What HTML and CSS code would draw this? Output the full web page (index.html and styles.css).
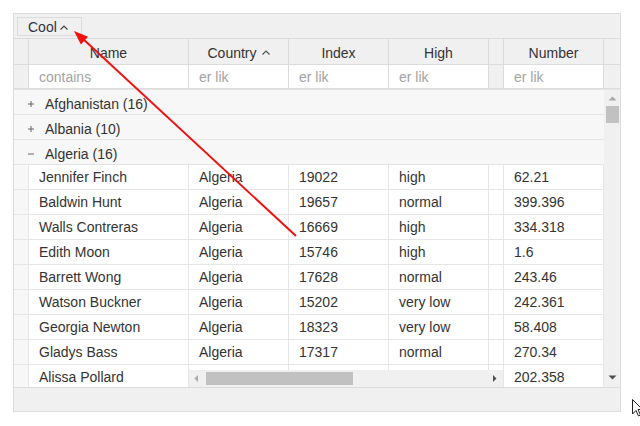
FILE: index.html
```html
<!DOCTYPE html>
<html>
<head>
<meta charset="utf-8">
<link rel="stylesheet" href="styles.css">
</head>
<body>
<div class="grid">
  <div class="group-panel">
    <span class="chip">Cool<svg class="chev" width="8" height="5" viewBox="0 0 8 5"><polyline points="0.5,4.5 4,1 7.5,4.5" fill="none" stroke="#444" stroke-width="1.2"/></svg></span>
  </div>
  <div class="head-row">
    <div class="hc indent"></div>
    <div class="hc name">Name</div>
    <div class="hc w100">Country<svg class="chev" width="8" height="5" viewBox="0 0 8 5"><polyline points="0.5,4.5 4,1 7.5,4.5" fill="none" stroke="#555" stroke-width="1.2"/></svg></div>
    <div class="hc w100">Index</div>
    <div class="hc w100">High</div>
    <div class="hc gap"></div>
    <div class="hc w100">Number</div>
    <div class="hc vs"></div>
  </div>
  <div class="filter-row">
    <div class="fc indent"></div>
    <div class="fc name input">contains</div>
    <div class="fc w100 input">er lik</div>
    <div class="fc w100 input">er lik</div>
    <div class="fc w100 input">er lik</div>
    <div class="fc gap"></div>
    <div class="fc w100 input">er lik</div>
    <div class="fc vs"></div>
  </div>
  <div class="body">
    <div class="rows">
      <div class="grow"><svg class="tog" width="14" height="8" viewBox="0 0 14 8"><path d="M4 4h6M7 1v6" stroke="#666" stroke-width="1"/></svg>Afghanistan (16)</div>
      <div class="grow"><svg class="tog" width="14" height="8" viewBox="0 0 14 8"><path d="M4 4h6M7 1v6" stroke="#666" stroke-width="1"/></svg>Albania (10)</div>
      <div class="grow"><svg class="tog" width="14" height="8" viewBox="0 0 14 8"><path d="M4 4h6" stroke="#666" stroke-width="1"/></svg>Algeria (16)</div>
      <div class="row"><div class="dc indent"></div><div class="dc name">Jennifer Finch</div><div class="dc w100">Algeria</div><div class="dc w100">19022</div><div class="dc w100">high</div><div class="dc gap"></div><div class="dc w100">62.21</div></div>
      <div class="row"><div class="dc indent"></div><div class="dc name">Baldwin Hunt</div><div class="dc w100">Algeria</div><div class="dc w100">19657</div><div class="dc w100">normal</div><div class="dc gap"></div><div class="dc w100">399.396</div></div>
      <div class="row"><div class="dc indent"></div><div class="dc name">Walls Contreras</div><div class="dc w100">Algeria</div><div class="dc w100">16669</div><div class="dc w100">high</div><div class="dc gap"></div><div class="dc w100">334.318</div></div>
      <div class="row"><div class="dc indent"></div><div class="dc name">Edith Moon</div><div class="dc w100">Algeria</div><div class="dc w100">15746</div><div class="dc w100">high</div><div class="dc gap"></div><div class="dc w100">1.6</div></div>
      <div class="row"><div class="dc indent"></div><div class="dc name">Barrett Wong</div><div class="dc w100">Algeria</div><div class="dc w100">17628</div><div class="dc w100">normal</div><div class="dc gap"></div><div class="dc w100">243.46</div></div>
      <div class="row"><div class="dc indent"></div><div class="dc name">Watson Buckner</div><div class="dc w100">Algeria</div><div class="dc w100">15202</div><div class="dc w100">very low</div><div class="dc gap"></div><div class="dc w100">242.361</div></div>
      <div class="row"><div class="dc indent"></div><div class="dc name">Georgia Newton</div><div class="dc w100">Algeria</div><div class="dc w100">18323</div><div class="dc w100">very low</div><div class="dc gap"></div><div class="dc w100">58.408</div></div>
      <div class="row"><div class="dc indent"></div><div class="dc name">Gladys Bass</div><div class="dc w100">Algeria</div><div class="dc w100">17317</div><div class="dc w100">normal</div><div class="dc gap"></div><div class="dc w100">270.34</div></div>
      <div class="row"><div class="dc indent"></div><div class="dc name">Alissa Pollard</div><div class="dc w100">Algeria</div><div class="dc w100">16340</div><div class="dc w100">high</div><div class="dc gap"></div><div class="dc w100">202.358</div></div>
      <div class="hscroll">
        <svg class="harrow" width="5" height="7" viewBox="0 0 5 7"><polygon points="4,0 4,7 0.5,3.5" fill="#a8a8a8"/></svg>
        <div class="hthumb"></div>
        <svg class="harrow right" width="5" height="7" viewBox="0 0 5 7"><polygon points="1,0 1,7 4.5,3.5" fill="#505050"/></svg>
      </div>
    </div>
    <div class="vscroll">
      <svg class="varrow" width="9" height="5" viewBox="0 0 9 5"><polygon points="0.5,4.5 8.5,4.5 4.5,0.5" fill="#a8a8a8"/></svg>
      <div class="vthumb"></div>
      <div class="vspace"></div>
      <svg class="varrow" width="9" height="5" viewBox="0 0 9 5"><polygon points="0.5,0.5 8.5,0.5 4.5,4.5" fill="#505050"/></svg>
    </div>
  </div>
  <div class="footer"></div>
</div>
<svg class="overlay" width="640" height="426" viewBox="0 0 640 426">
  <line x1="296" y1="236" x2="82" y2="38" stroke="#f01010" stroke-width="2"/>
  <polygon points="74,31 80.9,44.5 88,36.8" fill="#f01010"/>
  <polygon points="632.5,399.5 632.5,414 636,410.5 638.5,416 640.5,415 638,409.5 642.5,409.5" fill="#fff" stroke="#222" stroke-width="1"/>
</svg>
</body>
</html>
```

FILE: styles.css
```css
* { box-sizing: border-box; }
body {
  margin: 0;
  padding: 13px;
  font-family: "Liberation Sans", Arial, sans-serif;
  font-size: 14px;
  color: #333;
  background: #fff;
}
.grid {
  width: 608px;
  border: 1px solid #dcdcdc;
  background: #f0f0f0;
}
.group-panel {
  height: 24px;
  padding: 3px 0 0 3px;
}
.chip {
  display: inline-flex;
  align-items: flex-start;
  height: 19px;
  border: 1px solid #dcdcdc;
  padding: 1px 13px 0 10px;
  color: #2f3440;
  line-height: 17px;
}
.chip .chev { margin-left: 3px; margin-top: 6px; }
.head-row, .filter-row {
  display: flex;
}
.head-row {
  border-top: 1px solid #dcdcdc;
  border-bottom: 1px solid #dcdcdc;
}
.hc {
  height: 25px;
  padding-top: 5px;
  line-height: 19px;
  text-align: center;
  border-right: 1px solid #dcdcdc;
  display: flex;
  justify-content: center;
  align-items: flex-start;
}
.hc .chev { margin-left: 5px; margin-top: 6px; }
.indent { width: 15px; }
.name { width: 160px; }
.w100 { width: 100px; }
.gap { width: 15px; }
.hc.vs, .fc.vs { width: 16px; border-right: none; }
.filter-row { border-bottom: 1px solid #dcdcdc; }
.fc {
  height: 23px;
  padding-top: 1px;
  line-height: 22px;
  border-right: 1px solid #dcdcdc;
}
.fc.input {
  background: #fff;
  color: #a3a3a3;
  padding-left: 10px;
}
.body {
  display: flex;
  border-top: 1px solid #e4e4e4;
  height: 298px;
}
.rows {
  position: relative;
  width: 590px;
  height: 297px;
  overflow: hidden;
  background: #fff;
}
.grow {
  height: 25px;
  border-bottom: 1px solid #e4e4e4;
  background: #f7f7f7;
  padding: 4px 0 0 10px;
  line-height: 20px;
  display: flex;
  align-items: flex-start;
}
.tog { margin: 6px 7px 0 0; }
.row {
  display: flex;
  height: 25px;
  border-bottom: 1px solid #e6e6e6;
}
.dc {
  line-height: 24px;
  padding-left: 10px;
  border-right: 1px solid #e6e6e6;
  white-space: nowrap;
  overflow: hidden;
}
.dc.indent { background: #f7f7f7; padding: 0; }
.dc.gap { padding: 0; }
.hscroll {
  position: absolute;
  left: 175px;
  bottom: 0;
  width: 314px;
  height: 17px;
  background: #f0f0f0;
  display: flex;
  align-items: center;
}
.harrow { margin-left: 5px; }
.hthumb {
  width: 147px;
  height: 13px;
  background: #c1c1c1;
  margin-left: 7px;
}
.harrow.right { margin-left: auto; margin-right: 6px; }
.vscroll {
  width: 16px;
  height: 297px;
  background: #f0f0f0;
  display: flex;
  flex-direction: column;
  align-items: center;
}
.varrow { margin-top: 6px; flex: none; }
.vthumb {
  width: 13px;
  height: 17px;
  background: #c1c1c1;
  margin-top: 5px;
  flex: none;
}
.vspace { flex: 1; }
.vscroll .varrow:last-child { margin: 0 0 7px; }
.footer {
  height: 24px;
  border-top: 1px solid #dcdcdc;
  background: #f0f0f0;
}
.overlay {
  position: absolute;
  left: 0;
  top: 0;
  pointer-events: none;
}
```
